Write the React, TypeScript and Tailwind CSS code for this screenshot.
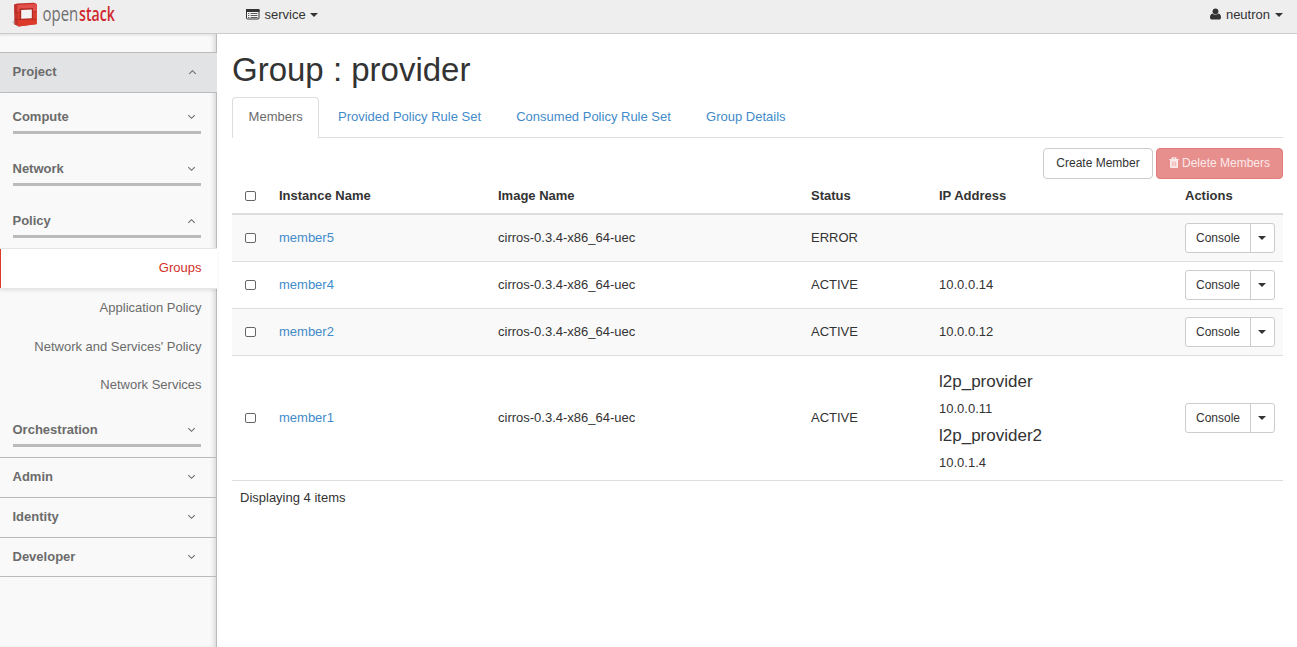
import React from 'react';

const members = [
    { name: 'member5', status: 'ERROR', addresses: [] },
    { name: 'member4', status: 'ACTIVE', addresses: [{ ip: '10.0.0.14' }] },
    { name: 'member2', status: 'ACTIVE', addresses: [{ ip: '10.0.0.12' }] },
    {
        name: 'member1',
        status: 'ACTIVE',
        addresses: [
            { network: 'l2p_provider', ip: '10.0.0.11' },
            { network: 'l2p_provider2', ip: '10.0.1.4' },
        ],
    },
] as { name: string; status: string; addresses: { network?: string; ip: string }[] }[];

function Caret() {
    return (
        <svg className="w-2 h-1 shrink-0" viewBox="0 0 8 4">
            <path d="M0 0h8L4 4z" fill="currentColor" />
        </svg>
    );
}

function Chevron({ up = false }: { up?: boolean }) {
    return (
        <svg className={`w-[9px] h-[6px] ${up ? 'rotate-180' : ''}`} viewBox="0 0 9 6">
            <path d="M1.3 1.2l3.2 3.1 3.2-3.1" fill="none" stroke="currentColor" strokeWidth="1.1" />
        </svg>
    );
}

function Logo() {
    return (
        <svg className="w-[110px] h-[32px]" viewBox="0 0 110 32">
            <path d="M0 22l3-2.500v6z" fill="#c8c8c8" />
            <path d="M2 4.500L5 3.500 22 2.800l2.700 1.200v20L7 26.500 2.500 24.500z" fill="#c0322a" />
            <path d="M5.500 5L24.700 4v20.200L6 26.500z" fill="#dc3b2c" />
            <path d="M5.500 5L24.700 4v7.500L5.500 12z" fill="#e2504b" />
            <path d="M7.500 8.500l13.500-.5v11.500l-13.500.5z" fill="#b32a22" />
            <path d="M9.200 10l10.600-.6v8.800l-10.600.6z" fill="#f3f3f3" />
            <path d="M2.500 11.800l5 .4M21 11.800l3.700-.2M2.500 19.300l5 .5M21 19.500l3.700-.3" stroke="#a82018" strokeWidth=".6" />
            <text transform="translate(30.5 21) scale(.73 1)" fontSize="20.500" fontFamily="Open Sans, sans-serif" fill="#6e6e70">open</text>
            <text transform="translate(67 21) scale(.69 1)" fontSize="20.500" fontFamily="Open Sans, sans-serif" fontWeight="600" fill="#d0262d">stack</text>
        </svg>
    );
}

function PanelHeading({ label, open = false }: { label: string; open?: boolean }) {
    return (
        <div className="h-[39px] flex items-center justify-between pl-[12.500px] pr-5 pb-[2px] font-bold">
            <span>{label}</span>
            <Chevron up={open} />
        </div>
    );
}

function SubHeading({ label, open = false }: { label: string; open?: boolean }) {
    return (
        <div className="h-[30px] ml-[13px] mr-[15px] border-b-3 border-[#bbb] font-bold flex justify-between leading-[18px] pt-[4px] pr-[5px]">
            <span className="-ml-[0.5px]">{label}</span>
            <span className="pt-[6px] flex items-start"><Chevron up={open} /></span>
        </div>
    );
}

function Sidebar() {
    return (
        <aside className="w-[217px] shrink-0 bg-[#f9f9f9] border-r border-[#bbb] shadow-[inset_-4px_0_4px_-2px_#d8d8d8,inset_0_3px_3px_-2px_#e2e2e2] text-[#6b6b6b] pt-[18px]">
            <div className="w-[217px] bg-[#e2e3e5] border-y border-[#bbb]">
                <PanelHeading label="Project" open />
            </div>
            <div className="flex flex-col gap-[22px] pt-[11px] pb-[10px]">
                <SubHeading label="Compute" />
                <SubHeading label="Network" />
                <SubHeading label="Policy" open />
            </div>
            <div className="text-right">
                <div className="w-[217px] h-[41px] bg-white border-y border-[#e5e5e5] shadow-[0_2px_3px_rgba(0,0,0,0.08)]">
                    <div className="h-[39px] border-l border-[#dd3c2b] pr-[15.500px] leading-[38px] text-[#d32f2a]">Groups</div>
                </div>
                <div className="pr-[14.500px] h-[38px] leading-[38px]">Application Policy</div>
                <div className="pr-[14.500px] h-[39px] leading-[39px]">Network and Services' Policy</div>
                <div className="pr-[14.500px] h-[38px] leading-[38px]">Network Services</div>
            </div>
            <div className="pt-[13px] pb-[10px]">
                <SubHeading label="Orchestration" />
            </div>
            <div className="border-t border-[#bbb]"><PanelHeading label="Admin" /></div>
            <div className="border-t border-[#bbb]"><PanelHeading label="Identity" /></div>
            <div className="border-y border-[#bbb] h-10"><PanelHeading label="Developer" /></div>
        </aside>
    );
}

function Checkbox() {
    return <input type="checkbox" className="appearance-none block w-[11px] h-[10px] ml-[4.500px] border border-[#666] rounded-[2px] bg-white" />;
}

function MembersTable() {
    return (
        <table className="w-full table-fixed border-separate border-spacing-0 text-left">
            <colgroup>
                <col className="w-[39px]" />
                <col className="w-[219px]" />
                <col className="w-[313px]" />
                <col className="w-[128px]" />
                <col className="w-[246px]" />
                <col />
            </colgroup>
            <thead>
                <tr className="h-[36px] *:border-b-2 *:border-[#ddd] *:px-2">
                    <th><Checkbox /></th>
                    <th>Instance Name</th>
                    <th>Image Name</th>
                    <th>Status</th>
                    <th>IP Address</th>
                    <th>Actions</th>
                </tr>
            </thead>
            <tbody>
                {members.map((member) => (
                    <tr key={member.name} className="odd:bg-[#f9f9f9] *:border-t first:*:border-t-0 *:border-[#ddd] *:p-2">
                        <td><Checkbox /></td>
                        <td className="text-[#428bca]">{member.name}</td>
                        <td>cirros-0.3.4-x86_64-uec</td>
                        <td>{member.status}</td>
                        <td>
                            {member.addresses.map(({ network, ip }) => (
                                <div key={ip}>
                                    {network && <h4 className="text-[17px] leading-[18px] my-[9px]">{network}</h4>}
                                    <p className="leading-[18px]">{ip}</p>
                                </div>
                            ))}
                        </td>
                        <td>
                            <div className="flex w-[90px] h-[30px] bg-white border border-[#ccc] rounded-[3px] text-xs">
                                <button className="w-[65px] border-r border-[#ccc]">Console</button>
                                <button className="flex-1 flex items-center justify-center pr-px"><Caret /></button>
                            </div>
                        </td>
                    </tr>
                ))}
            </tbody>
        </table>
    );
}

export default function App() {
    return (
        <div className="h-[647px] overflow-hidden flex flex-col bg-white text-[#333] text-[13px] leading-[18px] font-['Liberation_Sans',Arial,sans-serif]">
            {/* Top bar */}
            <header className="h-[34px] shrink-0 bg-[#eee] border-b border-[#ccc] flex items-start justify-between pl-3 pr-[14px]">
                <div className="flex">
                    <Logo />
                    <div className="flex items-center h-[29px] ml-[124px]">
                        <svg className="w-[14px] h-[12px] mr-[4.500px] mb-px" viewBox="0 0 14 12">
                            <rect x=".5" y="1.500" width="12.500" height="9.500" rx="1" fill="#f4f4f4" stroke="#333" />
                            <path d="M0 1h13.500v3H0z" fill="#333" />
                            <path d="M2 5.500h1.300M2 7.500h1.300M2 9.500h1.300M4.500 5.500h7M4.500 7.500h7M4.500 9.500h7" stroke="#333" strokeWidth=".8" />
                        </svg>
                        <span className="mr-1">service</span>
                        <Caret />
                    </div>
                </div>
                <div className="flex items-center h-[29px]">
                    <svg className="w-[11px] h-[12px] mr-[5px] mb-px" viewBox="0 0 11 12">
                        <circle cx="5.500" cy="3.300" r="2.900" fill="#333" />
                        <path d="M2.500 5.500C.7 6 0 7.500 0 9.500c0 1.500 1 2.100 2 2.100h7c1 0 2-.6 2-2.100 0-2-.7-3.500-2.500-4-1.500 1.600-4.500 1.600-6 0z" fill="#333" />
                    </svg>
                    <span className="mr-[5px]">neutron</span>
                    <Caret />
                </div>
            </header>

            <div className="flex flex-1">
                <Sidebar />
                <main className="flex-1 pl-[15px] pr-[14px]">
                    <h1 className="text-[33px] leading-[36px] pt-[18px] mb-[9px]">Group : provider</h1>

                    <div className="flex gap-[2px] h-[41px] border-b border-[#ddd] text-[#428bca] leading-[38px]">
                        <div className="h-[41px] px-[15.600px] border border-b-0 border-[#ddd] rounded-t bg-white text-[#6b6b6b]">Members</div>
                        <div className="px-[15.600px] border border-transparent">Provided Policy Rule Set</div>
                        <div className="px-[15.600px] border border-transparent">Consumed Policy Rule Set</div>
                        <div className="px-[15.600px] border border-transparent">Group Details</div>
                    </div>

                    <div className="flex justify-end gap-[3px] pt-[10px] text-xs">
                        <button className="w-[110px] h-[31px] pb-[2px] border border-[#ccc] rounded">Create Member</button>
                        <button className="w-[127px] h-[31px] pb-[2px] border border-[#e37c7a] rounded bg-[#e78f8d] text-[#fbeaea] flex items-center justify-center">
                            <svg className="w-[10px] h-[11px] mr-[3px]" viewBox="0 0 10 11">
                                <path d="M3.200 2V.8h3.600V2M.3 2.500h9.400" fill="none" stroke="currentColor" strokeWidth="1.200" />
                                <path d="M1 2.500h8V10q0 1-1 1H2q-1 0-1-1z" fill="currentColor" />
                                <path d="M3.300 4.500v4.800M5 4.500v4.800M6.700 4.500v4.800" stroke="#e78f8d" strokeWidth=".6" />
                            </svg>
                            Delete Members
                        </button>
                    </div>

                    <MembersTable />
                    <div className="border-t border-[#ddd] p-2">Displaying 4 items</div>
                </main>
            </div>
        </div>
    );
}
